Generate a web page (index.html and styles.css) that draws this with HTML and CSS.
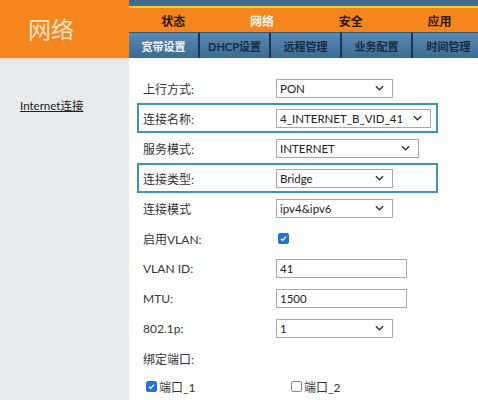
FILE: index.html
```html
<!DOCTYPE html>
<html lang="zh-CN">
<head>
<meta charset="utf-8">
<title>网络</title>
<link rel="stylesheet" href="styles.css">
</head>
<body>
<div class="page">
  <aside class="left">
    <div class="logo">网络</div>
    <nav class="side"><a class="side-link">Internet连接</a></nav>
  </aside>
  <main class="right">
    <div class="strip"></div>
    <div class="yline"></div>
    <ul class="menu">
      <li>状态</li>
      <li class="on">网络</li>
      <li>安全</li>
      <li>应用</li>
    </ul>
    <ul class="submenu">
      <li class="on">宽带设置</li>
      <li>DHCP设置</li>
      <li>远程管理</li>
      <li>业务配置</li>
      <li>时间管理</li>
    </ul>
    <div class="content">
      <div class="row"><span class="lbl">上行方式:</span><div class="sel w117"><span>PON</span><svg class="chev" viewBox="0 0 10 6"><path d="M1 1l4 4 4-4"/></svg></div></div>
      <div class="row hl"><span class="lbl">连接名称:</span><div class="sel w155"><span>4_INTERNET_B_VID_41</span><svg class="chev" viewBox="0 0 10 6"><path d="M1 1l4 4 4-4"/></svg></div></div>
      <div class="row"><span class="lbl">服务模式:</span><div class="sel w143"><span>INTERNET</span><svg class="chev" viewBox="0 0 10 6"><path d="M1 1l4 4 4-4"/></svg></div></div>
      <div class="row hl"><span class="lbl">连接类型:</span><div class="sel w117"><span>Bridge</span><svg class="chev" viewBox="0 0 10 6"><path d="M1 1l4 4 4-4"/></svg></div></div>
      <div class="row"><span class="lbl">连接模式</span><div class="sel w117"><span>ipv4&amp;ipv6</span><svg class="chev" viewBox="0 0 10 6"><path d="M1 1l4 4 4-4"/></svg></div></div>
      <div class="row"><span class="lbl">启用VLAN:</span><span class="cb on"><svg viewBox="0 0 12 12"><path d="M2.6 6.2l2.3 2.3 4.5-5"/></svg></span></div>
      <div class="row"><span class="lbl">VLAN ID:</span><div class="inp">41</div></div>
      <div class="row"><span class="lbl">MTU:</span><div class="inp">1500</div></div>
      <div class="row"><span class="lbl">802.1p:</span><div class="sel w117"><span>1</span><svg class="chev" viewBox="0 0 10 6"><path d="M1 1l4 4 4-4"/></svg></div></div>
      <div class="row"><span class="lbl">绑定端口:</span></div>
      <div class="row ports">
        <label class="port"><span class="cb on"><svg viewBox="0 0 12 12"><path d="M2.6 6.2l2.3 2.3 4.5-5"/></svg></span>端口_1</label>
        <label class="port"><span class="cb"></span>端口_2</label>
      </div>
    </div>
  </main>
</div>
</body>
</html>
```
FILE: styles.css
```css
* { box-sizing: border-box; }
html, body { margin: 0; padding: 0; }
body {
  width: 478px;
  height: 400px;
  overflow: hidden;
  background: #fff;
  font-family: Lato, "Noto Sans CJK SC", sans-serif;
  color: #333;
  font-size: 12px;
}
.page {
  display: grid;
  grid-template-columns: 129px 1fr;
  height: 400px;
}
.left { display: flex; flex-direction: column; }
.logo {
  height: 58px;
  background: #f5861e;
  color: #fde4c8;
  font-family: "Noto Sans CJK SC", sans-serif;
  font-size: 23px;
  display: flex;
  align-items: center;
  padding-left: 28px;
  padding-bottom: 2px;
}
.side {
  flex: 1;
  background: #e9eaeb;
  border-top: 1px solid #f6dcc0;
  padding: 38px 0 0 20px;
}
.side-link {
  color: #222;
  text-decoration: underline;
  font-size: 11.5px;
}
.right { display: flex; flex-direction: column; }
.strip { height: 6px; background: #3e6a8e; }
.yline { height: 2px; background: #f1d21c; }
ul { list-style: none; margin: 0; padding: 0; }
.menu {
  height: 24px;
  background: #f5861e;
  display: grid;
  grid-template-columns: repeat(4, 1fr);
}
.menu li {
  display: flex;
  align-items: center;
  justify-content: center;
  font-family: "Noto Sans CJK SC", sans-serif;
  font-weight: bold;
  font-size: 12px;
  color: #2a1a0a;
}
.menu li.on { color: #fff3e6; }
.submenu {
  height: 26px;
  background: linear-gradient(#5b8bb3, #3b6b94);
  display: flex;
  border-top: 1px solid #2f5677;
}
.submenu li {
  flex: 0 0 71px;
  display: flex;
  align-items: center;
  justify-content: center;
  font-weight: bold;
  font-size: 11px;
  color: #182c42;
  border-right: 2px solid #1d3550;
}
.submenu li:last-child { border-right: 0; }
.submenu li.on { color: #f2f6fa; }
.content { padding-top: 15px; }
.row {
  height: 30px;
  margin-left: 8px;
  width: 301px;
  padding-left: 4px;
  border: 2px solid transparent;
  display: flex;
  align-items: center;
  font-size: 12px;
  color: #333;
}
.row.hl { border-color: #3d93b8; }
.lbl { width: 133px; flex: none; }
.sel {
  height: 19px;
  border: 1px solid #a8a8a8;
  background: #fff;
  display: flex;
  align-items: center;
  justify-content: space-between;
  padding: 0 8px 0 3px;
  font-size: 11.5px;
  color: #222;
}
.w117 { width: 117px; }
.w143 { width: 143px; }
.w155 { width: 155px; }
.chev { width: 9px; height: 6px; fill: none; stroke: #333; stroke-width: 1.6; }
.inp {
  width: 131px;
  height: 19px;
  border: 1px solid #a8a8a8;
  padding-left: 3px;
  display: flex;
  align-items: center;
  font-size: 11.5px;
  color: #222;
}
.cb {
  width: 11px;
  height: 11px;
  border: 1px solid #8a8a8a;
  border-radius: 2px;
  background: #fff;
  display: inline-flex;
  flex: none;
  margin-left: 2px;
}
.cb.on { background: #2870d8; border-color: #2870d8; }
.cb svg { width: 100%; height: 100%; fill: none; stroke: #fff; stroke-width: 1.8; }
.row.ports { height: 26px; padding-left: 7px; }
.port {
  display: flex;
  align-items: center;
  gap: 1px;
  font-size: 12px;
  width: 149px;
}
.port .cb { margin-left: 0; margin-right: 1px; }
```
